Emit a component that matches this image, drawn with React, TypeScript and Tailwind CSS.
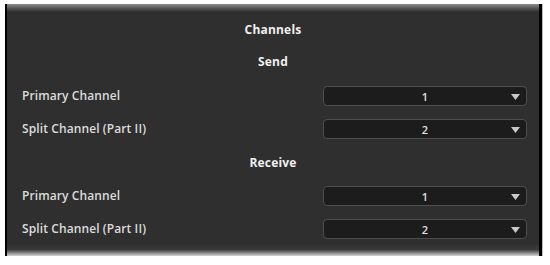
import React from "react";

function Select({ value }: { value: string }) {
  return (
    <div className="relative flex h-[20px] w-[204px] items-center justify-center rounded-[4px] border border-[#4e4e4e] bg-[#1c1c1c]">
      <span className="text-[11px] font-semibold leading-none text-[#e0e0e0]">{value}</span>
      <svg className="absolute right-[6px] top-[7px]" width="9" height="6" viewBox="0 0 9 6">
        <polygon points="0,0 9,0 4.5,6" fill="#c8c8c8" />
      </svg>
    </div>
  );
}

function Row({ label, value }: { label: string; value: string }) {
  return (
    <div className="flex h-[20px] items-center justify-between pl-[15px] pr-[12px]">
      <span className="text-[12px] font-semibold leading-none tracking-[0.1px] text-[#dcdcdc]">{label}</span>
      <Select value={value} />
    </div>
  );
}

function Header({ text }: { text: string }) {
  return (
    <div className="flex h-[20px] items-center justify-center">
      <span className="text-[12px] font-bold leading-none tracking-[0.2px] text-[#f0f0f0]">{text}</span>
    </div>
  );
}

export default function App() {
  return (
    <div
      className="h-[265px] w-[550px] bg-white pl-[5px] pt-[4px]"
      style={{ fontFamily: '"Open Sans", "Noto Sans", sans-serif' }}
    >
      <div className="flex h-[252px] w-[538px]">
        <div className="flex flex-1 flex-col border-l-2 border-r-[3px] border-black bg-[#2f2f2f]">
          <div className="h-[8px] bg-gradient-to-b from-[#8c8c8c] to-[#2f2f2f]" />
          <div className="mt-[8px]">
            <Header text="Channels" />
          </div>
          <div className="mt-[12px]">
            <Header text="Send" />
          </div>
          <div className="mt-[14px]">
            <Row label="Primary Channel" value="1" />
          </div>
          <div className="mt-[13px]">
            <Row label="Split Channel (Part II)" value="2" />
          </div>
          <div className="mt-[14px]">
            <Header text="Receive" />
          </div>
          <div className="mt-[13px]">
            <Row label="Primary Channel" value="1" />
          </div>
          <div className="mt-[13px]">
            <Row label="Split Channel (Part II)" value="2" />
          </div>
          <div className="mt-auto h-[13px] bg-gradient-to-b from-[#2f2f2f] via-[#3a3a3a] to-[#d6d6d6]" />
        </div>
        <div className="w-[1px] bg-[#bdbdbd]" />
      </div>
    </div>
  );
}
